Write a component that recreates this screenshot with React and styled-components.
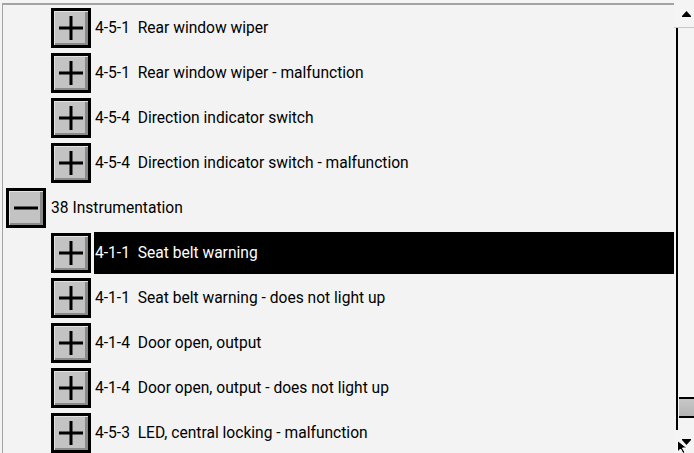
import styled, { createGlobalStyle } from 'styled-components';

const Global = createGlobalStyle`
  html, body {
    margin: 0;
    background: #f4f4f4;
  }
  body {
    font-family: Roboto, "Noto Sans", "Liberation Sans", sans-serif;
  }
`;

const Frame = styled.div`
  width: 694px;
  height: 453px;
  padding-top: 3px;
  padding-left: 2px;
  box-sizing: border-box;
  display: flex;
  overflow: hidden;
`;

const Tree = styled.div`
  width: 671px;
  border-top: 2px solid #a3a3a3;
  border-left: 1px solid #a3a3a3;
  background: #f3f3f3;
  display: flex;
  flex-direction: column;
`;

const Row = styled.div`
  height: 45px;
  flex: none;
  display: flex;
  align-items: center;
  padding-left: ${p => (p.$level === 1 ? 3 : 48)}px;
`;

const Toggle = styled.div`
  width: 40px;
  height: 40px;
  box-sizing: border-box;
  border: 3px solid #000;
  background: #c3c3c3;
  box-shadow: inset 1px 1px 0 #e2e2e2, inset -3px -2px 0 #8a8a8a;
  position: relative;
  flex: none;
  &::before, &::after {
    content: "";
    position: absolute;
    background: #000;
    left: 50%;
    top: 50%;
    transform: translate(-50%, -50%);
  }
  &::before {
    width: 24px;
    height: 3px;
  }
  &::after {
    width: 3px;
    height: 24px;
    display: ${p => (p.$open ? 'none' : 'block')};
  }
`;

const Label = styled.div`
  margin-left: ${p => (p.$level === 1 ? 4 : 3)}px;
  flex: 1;
  height: 42px;
  display: flex;
  align-items: center;
  padding-left: 1px;
  font-size: 15.6px;
  white-space: pre;
  color: ${p => (p.$selected ? '#fff' : '#000')};
  background: ${p => (p.$selected ? '#000' : 'transparent')};
`;

const Scrollbar = styled.div`
  flex: 1;
  display: flex;
  flex-direction: column;
  margin-top: -3px;
`;

const ArrowButton = styled.div`
  height: ${p => p.$h}px;
  flex: none;
  display: flex;
  align-items: center;
  justify-content: center;
  padding-left: 4px;
  border-bottom: ${p => (p.$up ? '1px solid #c8c8c8' : 'none')};
  position: relative;
`;

const Track = styled.div`
  flex: 1;
  border-left: 2px solid #000;
  margin-left: 2px;
  display: flex;
  flex-direction: column;
  justify-content: flex-end;
  padding-bottom: 12px;
`;

const Thumb = styled.div`
  height: 17px;
  border-top: 2px solid #000;
  border-bottom: 2px solid #000;
  background: linear-gradient(#c8c8c8, #b4b4b4);
  margin-left: 1px;
`;

const Cursor = styled.svg`
  position: absolute;
  left: 3px;
  top: 10px;
`;

const rows = [
  { level: 2, text: '4-5-1  Rear window wiper' },
  { level: 2, text: '4-5-1  Rear window wiper - malfunction' },
  { level: 2, text: '4-5-4  Direction indicator switch' },
  { level: 2, text: '4-5-4  Direction indicator switch - malfunction' },
  { level: 1, text: '38 Instrumentation', open: true },
  { level: 2, text: '4-1-1  Seat belt warning', selected: true },
  { level: 2, text: '4-1-1  Seat belt warning - does not light up' },
  { level: 2, text: '4-1-4  Door open, output' },
  { level: 2, text: '4-1-4  Door open, output - does not light up' },
  { level: 2, text: '4-5-3  LED, central locking - malfunction' },
];

export default function App() {
  return (
    <>
      <Global />
      <Frame>
        <Tree>
          {rows.map((r, i) => (
            <Row key={i} $level={r.level}>
              <Toggle $open={r.open} />
              <Label $level={r.level} $selected={r.selected}>{r.text}</Label>
            </Row>
          ))}
        </Tree>
        <Scrollbar>
          <ArrowButton $h={27} $up>
            <svg width="9" height="6" viewBox="0 0 9 6"><path d="M4.5 0 L9 5 L0 5 Z" fill="#000" /><rect x="0" y="5" width="9" height="1" fill="#000" /></svg>
          </ArrowButton>
          <Track>
            <Thumb />
          </Track>
          <ArrowButton $h={23}>
            <svg width="9" height="6" viewBox="0 0 9 6"><rect x="0" y="0" width="9" height="1" fill="#000" /><path d="M0 1 L9 1 L4.5 6 Z" fill="#000" /></svg>
            <Cursor width="12" height="14" viewBox="0 0 12 14">
              <path d="M0.5 0.5 L0.5 12 L3.5 9 L6 13.5 L8 12.5 L5.5 8 L10 8 Z" fill="#000" stroke="#fff" strokeWidth="1" />
            </Cursor>
          </ArrowButton>
        </Scrollbar>
      </Frame>
    </>
  );
}
